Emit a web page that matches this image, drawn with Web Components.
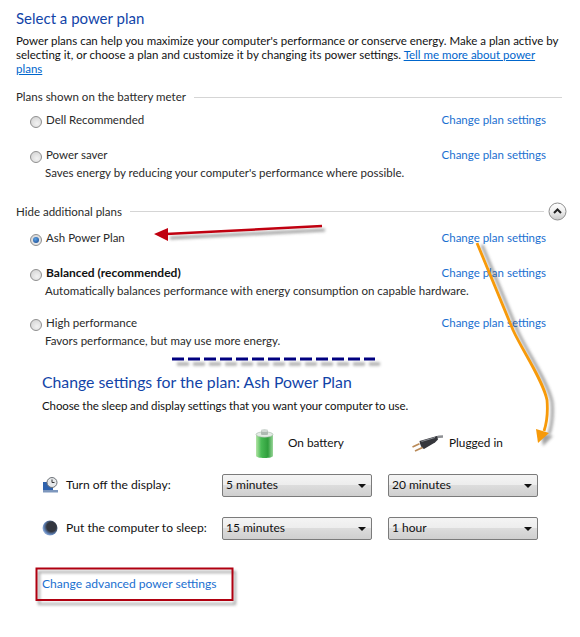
<!DOCTYPE html>
<html><head><meta charset="utf-8"><style>
html,body{margin:0;padding:0;background:#fff}
body{width:580px;height:637px;overflow:hidden;font:11.500px/14px Lato,"Noto Sans",sans-serif;color:#1a1a1a}
</style></head><body>
<power-page></power-page>
<script>
const icons={
battery:`<svg width="20" height="30" viewBox="0 0 20 30"><defs><linearGradient id="g" x1="0" x2="1" y1="0" y2="0"><stop offset="0" stop-color="#b4e4a6"/><stop offset=".3" stop-color="#49bb55"/><stop offset=".7" stop-color="#2f9e3c"/><stop offset="1" stop-color="#9ad69a"/></linearGradient></defs><path d="M1 6.500h17v21.500c0 1-3.500 2-8.500 2S1 29 1 28z" fill="url(#g)"/><ellipse cx="9.500" cy="6.500" rx="8.500" ry="2.700" fill="#e3ebe4" stroke="#a5b8aa" stroke-width=".6"/><path d="M6 2.500v4c1 .8 6 .8 7 0v-4z" fill="#aeb9b2"/><ellipse cx="9.500" cy="2.500" rx="3.500" ry="1.500" fill="#d0d8d3"/></svg>`,
plug:`<svg width="31" height="17" viewBox="0 0 31 17"><path d="M24 2.500C26 1.500 29 1.500 31 1.500" stroke="#8d8f93" stroke-width="2.500" fill="none"/><path d="M7.500 6 25 1l1 3.500-3 3-11 6.500c-2.500-1-4-4-4.500-8z" fill="#35373c"/><path d="M9.500 6.500 23 2.500" stroke="#8b8e94" fill="none"/><path d="M.5 12 7.500 8.800M3 16 10.500 12.500" stroke="#b98a58" stroke-width="1.700" fill="none"/></svg>`,
display:`<svg width="16" height="16" viewBox="0 0 16 16"><path d="M1 5h10v10H1z" fill="#2f62ad"/><path d="M1 13h15v2.500H1z" fill="#7d97bd"/><circle cx="10" cy="5.500" r="5" fill="#e6e8ea" stroke="#6d7278"/><path d="M10 2.500v3h2.500" stroke="#333" fill="none"/></svg>`,
sleep:`<svg width="16" height="16" viewBox="0 0 16 16"><defs><radialGradient id="m" cx=".6" cy=".42" r=".75"><stop offset=".42" stop-color="#33363f"/><stop offset=".68" stop-color="#6286bd"/><stop offset="1" stop-color="#e6edf7"/></radialGradient></defs><circle cx="8" cy="8" r="7.500" fill="url(#m)"/></svg>`
};
class PowerRadio extends HTMLElement{constructor(){super();const c=this.hasAttribute('checked');this.attachShadow({mode:'open'}).innerHTML=`<style>:host{display:block;width:12px;height:12px}
i{display:block;box-sizing:border-box;width:12px;height:12px;border-radius:50%;border:1px solid #8f8f8f;background:radial-gradient(circle at 60% 65%,#f2f2f2,#cfcfcf);position:relative}
b{position:absolute;left:2px;top:2px;width:6px;height:6px;border-radius:50%;background:radial-gradient(circle at 40% 35%,#5aa2e6,#123f86)}</style><i>${c?'<b></b>':''}</i>`}}
customElements.define('power-radio',PowerRadio);
class PowerLink extends HTMLElement{constructor(){super();this.attachShadow({mode:'open'}).innerHTML=`<style>:host{display:inline;color:#1a6fd0}</style><slot></slot>`}}
customElements.define('power-link',PowerLink);
class PlanRow extends HTMLElement{constructor(){super();const d=this.getAttribute('desc'),n=this.getAttribute('name'),b=this.hasAttribute('bold');this.attachShadow({mode:'open'}).innerHTML=`<style>:host{display:block;height:var(--h,35px);padding-left:14px;box-sizing:border-box;width:530px}
.top{display:flex;align-items:center;height:16px}.n{margin-left:4px;flex:1;color:#2a2a2a;${b?'font-weight:700;color:#111;font-size:12px':''}}
power-radio{margin-top:4px}
.d{margin:3px 0 0 15px;white-space:nowrap;color:#2a2a2a}</style><div class="top"><power-radio ${this.hasAttribute('checked')?'checked':''}></power-radio><span class="n">${n}</span><power-link>Change plan settings</power-link></div>${d?`<div class="d">${d}</div>`:''}`}}
customElements.define('plan-row',PlanRow);
class GroupHead extends HTMLElement{constructor(){super();this.attachShadow({mode:'open'}).innerHTML=`<style>:host{display:flex;align-items:center;gap:8px;height:16px;color:#2a2a2a}i{flex:1;border-top:1px solid #d5d5d5}</style><slot></slot><i></i>`}}
customElements.define('group-head',GroupHead);
class CollapseButton extends HTMLElement{constructor(){super();this.attachShadow({mode:'open'}).innerHTML=`<style>:host{display:block;width:19px;height:19px}</style><svg width="19" height="19" viewBox="0 0 19 19" style="display:block"><defs><linearGradient id="c" x1="0" y1="0" x2="0" y2="1"><stop offset="0" stop-color="#fff"/><stop offset=".5" stop-color="#eee"/><stop offset="1" stop-color="#c8c8c8"/></linearGradient></defs><circle cx="9.500" cy="9.500" r="8.500" fill="url(#c)" stroke="#8e8e8e"/><path d="M6 11l3.500-3.500L13 11" fill="none" stroke="#222" stroke-width="2"/></svg>`}}
customElements.define('collapse-button',CollapseButton);
class FakeSelect extends HTMLElement{constructor(){super();this.attachShadow({mode:'open'}).innerHTML=`<style>:host{display:flex;align-items:center;justify-content:space-between;box-sizing:border-box;width:150px;height:23px;padding:0 3px 1px;border:1px solid #7b7b7b;border-radius:2px;background:linear-gradient(#f4f4f4 0,#ededed 48%,#dcdcdc 50%,#cfcfcf 100%);color:#111;font-size:12px}
i{width:0;height:0;border:4px solid transparent;border-top:4px solid #111;border-bottom:0;margin:1px 2px 0 0}</style><slot></slot><i></i>`}}
customElements.define('fake-select',FakeSelect);
class PowerPage extends HTMLElement{constructor(){super();this.attachShadow({mode:'open'}).innerHTML=`<style>
:host{display:block;position:relative;width:580px;height:637px;box-sizing:border-box;padding:8px 0 0 16px}
h1,h2{font-weight:400;margin:0;color:#1244a8;line-height:20px}
h1{font-size:15px}h2{font-size:15.800px}
.intro{margin:6px 0 0;width:546px;color:#111;white-space:nowrap}
.intro div{height:14px}
a{color:#0066cc;text-decoration:underline}
.sec1{margin-top:13px;width:546px;display:flex}
.plans{display:flex;flex-direction:column}
.hidehead{display:flex;align-items:center;margin-top:21px;width:551px;gap:4px}
.hidehead group-head{flex:1}
.chg{margin:24px 0 0 26px}
.sub{margin-top:7px;color:#111;letter-spacing:-.11px}
.hdrow{display:grid;grid-template-columns:164px 150px 150px;column-gap:16px;margin-top:15px}
.cols{display:grid;grid-template-columns:164px 150px 150px;column-gap:16px;row-gap:20px;align-items:center;margin-top:16px}
.hd{display:flex;align-items:center;height:30px;color:#111;font-size:11.800px}
.hd svg,.lab svg{display:block;flex:none}
.lab{display:flex;align-items:center;gap:8px;color:#111;white-space:nowrap;font-size:12.100px;padding-bottom:2px}
.adv{margin-top:37px;font-size:12.100px}
svg.o{position:absolute;left:0;top:0;pointer-events:none}
</style>
<h1>Select a power plan</h1>
<div class="intro">
<div>Power plans can help you maximize your computer's performance or conserve energy. Make a plan active by</div>
<div><span>selecting it, or choose a plan and customize it by changing its power settings.</span> <a>Tell me more about power</a></div>
<div><a>plans</a></div>
</div>
<group-head class="sec1">Plans shown on the battery meter</group-head>
<div class="plans" style="margin-top:7px">
<plan-row name="Dell Recommended"></plan-row>
<plan-row name="Power saver" style="--h:34px" desc="Saves energy by reducing your computer's performance where possible."></plan-row>
</div>
<div class="hidehead"><group-head>Hide additional plans</group-head><collapse-button></collapse-button></div>
<div class="plans" style="margin-top:9px">
<plan-row name="Ash Power Plan"  checked></plan-row>
<plan-row name="Balanced (recommended)" style="--h:50px" bold desc="Automatically balances performance with energy consumption on capable hardware."></plan-row>
<plan-row name="High performance" style="--h:33px" desc="Favors performance, but may use more energy."></plan-row>
</div>
<div class="chg">
<h2>Change settings for the plan: Ash Power Plan</h2>
<div class="sub">Choose the sleep and display settings that you want your computer to use.</div>
<div class="hdrow">
<span></span>
<div class="hd" style="padding-left:33px;gap:13px">${icons.battery}<span>On battery</span></div>
<div class="hd" style="padding-left:24px;gap:6px">${icons.plug}<span>Plugged in</span></div>
</div>
<div class="cols">
<div class="lab">${icons.display}<span>Turn off the display:</span></div>
<fake-select>5 minutes</fake-select><fake-select>20 minutes</fake-select>
<div class="lab">${icons.sleep}<span>Put the computer to sleep:</span></div>
<fake-select>15 minutes</fake-select><fake-select>1 hour</fake-select>
</div>
<div class="adv"><power-link>Change advanced power settings</power-link></div>
</div>
<svg class="o" width="580" height="637" viewBox="0 0 580 637"><defs><filter id="s" x="-20%" y="-50%" width="140%" height="200%"><feGaussianBlur stdDeviation="1.500"/></filter></defs>
<g filter="url(#s)" opacity=".5" fill="none" stroke="#444"><path d="M170 238 325 230" stroke-width="3"/><path d="M482 245 518 332C527 352 548 382 552 402 553 414 552 425 549 434" stroke-width="3"/><path d="M541 433 553 436 543 446z" fill="#444" stroke="none"/><path d="M177 364H380" stroke-width="3" stroke-dasharray="12 4"/><rect x="39" y="572" width="196" height="32" stroke-width="2"/></g>
<path d="M166 234 322 226" stroke="#c00010" stroke-width="2.500" fill="none"/><path d="M154 234 168 228 168 241z" fill="#c00010"/>
<path d="M477 243 513 330C522 350 543 380 547 400 548 412 547 422 544 431" stroke="#f79a0a" stroke-width="2.800" fill="none"/><path d="M536 429 549 433 538 443z" fill="#f79a0a"/>
<path d="M172 359H375" stroke="#000080" stroke-width="3" stroke-dasharray="12 4"/>
<rect x="36.500" y="568.500" width="196" height="31.500" fill="none" stroke="#b00010" stroke-width="2"/></svg>`}}
customElements.define('power-page',PowerPage);
</script></body></html>
